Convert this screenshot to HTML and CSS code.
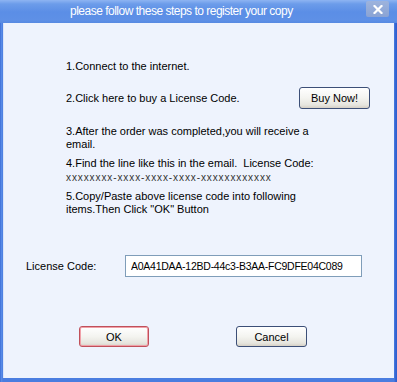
FILE: index.html
```html
<!DOCTYPE html>
<html lang="en">
<head>
  <meta charset="utf-8">
  <title>Register</title>
  <link rel="stylesheet" href="styles.css">
</head>
<body>
  <div class="window">
    <!-- Title bar -->
    <div class="titlebar">
      <span class="title-text">please follow these steps to register your copy</span>
      <button class="close-btn" aria-label="Close">
        <svg width="10" height="9" viewBox="0 0 10 9">
          <path d="M1.5 1 L8.5 8 M8.5 1 L1.5 8" stroke="#fff" stroke-width="2.2" stroke-linecap="square"/>
        </svg>
      </button>
    </div>

    <!-- Dialog body -->
    <div class="content">
      <div class="steps">
        <p class="step step-1">1.Connect to the internet.</p>
        <div class="step-row">
          <p class="step">2.Click here to buy a License Code.</p>
          <button class="xp-btn buy-btn">Buy Now!</button>
        </div>
        <p class="step step-3">3.After the order was completed,you will receive a<br>email.</p>
        <p class="step step-4">4.Find the line like this in the email.&nbsp; License Code:</p>
        <p class="code-sample">xxxxxxxx-xxxx-xxxx-xxxx-xxxxxxxxxxxx</p>
        <p class="step step-5">5.Copy/Paste above license code into following<br>items.Then Click "OK" Button</p>
      </div>

      <div class="license-row">
        <label class="license-label" for="licenseCode">License Code:</label>
        <input class="license-input" id="licenseCode" type="text" value="A0A41DAA-12BD-44c3-B3AA-FC9DFE04C089">
      </div>

      <div class="actions">
        <button class="xp-btn ok-btn">OK</button>
        <button class="xp-btn cancel-btn">Cancel</button>
      </div>
    </div>
  </div>
</body>
</html>
```

FILE: styles.css
```css
/* Page reset */
body {
  margin: 0;
  background-color: #0a246a;
  font-family: "Liberation Sans", Arial, sans-serif;
  font-size: 11px;
  color: #000;
}

p {
  margin: 0;
}

/* Window frame */
.window {
  width: 397px;
  height: 382px;
  display: flex;
  flex-direction: column;
  background: linear-gradient(to right, #2f5fcf 0, #5b8ee8 1px, #4a7de0 3px, #4a7de0 394px, #2f5fcf 396px);
  box-sizing: border-box;
  padding-bottom: 4px;
}

.titlebar {
  height: 23px;
  display: flex;
  align-items: center;
  background: linear-gradient(to bottom, #8eb4f2 0, #6c9cea 4px, #5b8ee6 12px, #5e90e6 20px, #5689e2 23px);
  flex-shrink: 0;
}

.title-text {
  padding-left: 70px;
  font-size: 12px;
  letter-spacing: -0.5px;
  color: #fff;
  margin-top: -1px;
}

.close-btn {
  margin-left: auto;
  margin-right: 8px;
  margin-top: -5px;
  width: 23px;
  height: 16px;
  padding: 0;
  border: none;
  border-radius: 2px;
  background: linear-gradient(to bottom, #9db3dc, #8aa3d4);
  display: flex;
  align-items: center;
  justify-content: center;
}

/* Client area */
.content {
  flex: 1;
  margin: 0 3px;
  background-color: #eef3fd;
  border-left: 1px solid #dbe5f8;
  display: flex;
  flex-direction: column;
}

.steps {
  padding-left: 62px;
  padding-top: 37px;
  line-height: 13px;
}

.step-row {
  display: flex;
  align-items: center;
  margin-top: 14px;
  width: 304px;
  justify-content: space-between;
}

.step-3 {
  margin-top: 16px;
}

.step-4 {
  margin-top: 6px;
}

.code-sample {
  font-size: 10px;
  letter-spacing: 0.9px;
  line-height: 11px;
  margin-top: 2px;
  color: #333;
}

.step-5 {
  margin-top: 7px;
}

/* XP style push buttons */
.xp-btn {
  font-family: "Liberation Sans", Arial, sans-serif;
  font-size: 11px;
  color: #000;
  padding: 0;
  border: 1px solid #3c4f77;
  border-radius: 3px;
  background: linear-gradient(to bottom, #ffffff 0, #f4f4f0 50%, #e6e5de 85%, #d6d0c5 100%);
  cursor: pointer;
}

.buy-btn {
  width: 71px;
  height: 22px;
}

/* License code row */
.license-row {
  display: flex;
  align-items: center;
  margin-top: 39px;
  padding-left: 22px;
}

.license-label {
  width: 99px;
}

.license-input {
  width: 237px;
  height: 22px;
  box-sizing: border-box;
  border: 1px solid #7f9db9;
  padding: 0 5px;
  font-family: "Liberation Sans", Arial, sans-serif;
  font-size: 10.5px;
  letter-spacing: -0.25px;
  background: #fff;
  outline: none;
}

/* Bottom buttons */
.actions {
  display: flex;
  margin-top: 49px;
  padding-left: 75px;
  gap: 87px;
}

.ok-btn {
  width: 70px;
  height: 21px;
  border-color: #c0505a;
  box-shadow: inset 0 0 0 1px #f0a0a8;
}

.cancel-btn {
  width: 71px;
  height: 21px;
}
```
